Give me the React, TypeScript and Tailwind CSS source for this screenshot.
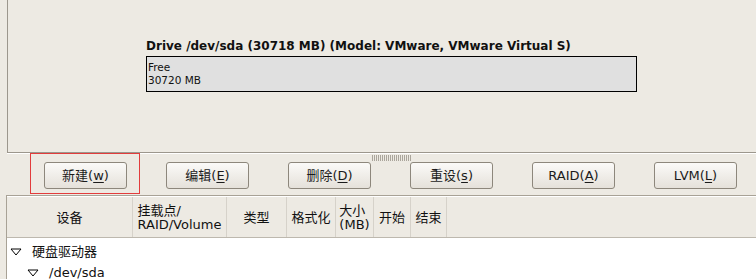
import React from "react";

const FONT = "font-['DejaVu_Sans','Noto_Sans_CJK_SC',sans-serif]";

function Expander() {
  return (
    <svg width="12" height="8" viewBox="0 0 12 8" className="shrink-0">
      <polygon points="1,1 11,1 6,7" fill="white" stroke="#000" strokeWidth="1" strokeLinejoin="miter" />
    </svg>
  );
}

function Btn({ label, mn }: { label: string; mn: string }) {
  return (
    <button className="w-[83px] h-[27px] rounded-[3px] border border-[#8d877c] bg-gradient-to-b from-[#fbfaf8] to-[#e5e1da] text-[13px] text-[#1b1b1b] flex items-center justify-center leading-none">
      <span>
        {label}(<span className="underline underline-offset-2">{mn}</span>)
      </span>
    </button>
  );
}

const cols: { w: number; lines: string[] }[] = [
  { w: 126, lines: ["设备"] },
  { w: 94, lines: ["挂载点/", "RAID/Volume"] },
  { w: 60, lines: ["类型"] },
  { w: 49, lines: ["格式化"] },
  { w: 38, lines: ["大小", "(MB)"] },
  { w: 37, lines: ["开始"] },
  { w: 36, lines: ["结束"] },
];

export default function App() {
  return (
    <div className={`w-[756px] h-[279px] overflow-hidden bg-[#edeae3] flex flex-col relative ${FONT}`}>
      {/* drive graph pane */}
      <div className="h-[154px] pl-[7px] shrink-0">
        <div className="h-[153px] border-l border-b border-[#9c978d] pl-[138px] pt-[39px]">
          <div className="text-[12px] font-bold leading-[15px] text-[#111] whitespace-nowrap">
            Drive /dev/sda (30718 MB) (Model: VMware, VMware Virtual S)
          </div>
          <div className="mt-[2px] w-[491px] h-[36px] border border-black bg-[#e0e0e0] px-[1px] pt-[4px] text-[10.5px] leading-[13px] text-[#111]">
            <div>Free</div>
            <div>30720 MB</div>
          </div>
        </div>
        <div className="h-[1px] bg-white" />
      </div>

      {/* buttons */}
      <div className="h-[41px] shrink-0 relative flex items-start pt-[8px] pl-[44px] gap-[39px]">
        <div className="absolute left-[372px] top-[1px] w-[40px] h-[6px] bg-[repeating-linear-gradient(90deg,#aaa59b_0_1px,transparent_1px_2px)]" />
        <div className="absolute left-[30px] top-[-1px] w-[110px] h-[41px] border border-[#e23c3c]" />
        <Btn label="新建" mn="w" />
        <Btn label="编辑" mn="E" />
        <Btn label="删除" mn="D" />
        <Btn label="重设" mn="s" />
        <Btn label="RAID" mn="A" />
        <Btn label="LVM" mn="L" />
      </div>

      {/* tree */}
      <div className="flex-1 ml-[6px] border-t border-l border-[#a8a296] flex flex-col">
        <div className="h-[42px] shrink-0 flex border-t border-white border-b border-b-[#bdb8ae] text-[13px] text-[#111]">
          {cols.map((c, i) => (
            <div
              key={i}
              style={{ width: c.w }}
              className="h-full flex items-center justify-center border-r border-[#d6d2ca] shrink-0 pt-[1px]"
            >
              <div className="text-left leading-[14px] whitespace-nowrap">
                {c.lines.map((l) => (
                  <div key={l}>{l}</div>
                ))}
              </div>
            </div>
          ))}
        </div>
        <div className="flex-1 bg-white text-[13px] text-[#111] pt-[2px]">
          <div className="h-[22px] flex items-center gap-[10px] pl-[3px] pt-[2px]">
            <Expander />
            <span>硬盘驱动器</span>
          </div>
          <div className="h-[22px] flex items-center gap-[10px] pl-[20px]">
            <Expander />
            <span>/dev/sda</span>
          </div>
        </div>
      </div>
    </div>
  );
}
